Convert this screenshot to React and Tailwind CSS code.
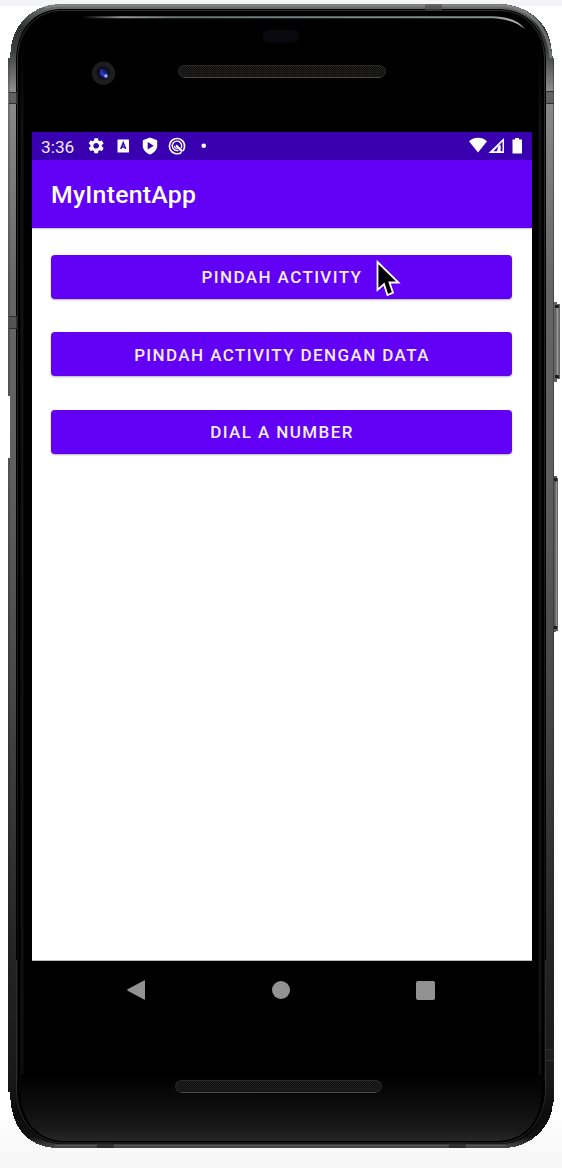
import React from "react";

function DeviceFrame() {
  return (
    <svg className="pointer-events-none absolute inset-0" width="562" height="1168" viewBox="0 0 562 1168" aria-hidden="true">
      <defs>
        <linearGradient id="rail" x1="0" y1="0" x2="0" y2="1">
          <stop offset="0" stopColor="#747575" />
          <stop offset="0.02" stopColor="#303131" />
          <stop offset="0.04" stopColor="#3c3d3d" />
          <stop offset="0.075" stopColor="#8b8b8b" />
          <stop offset="0.25" stopColor="#656565" />
          <stop offset="0.4" stopColor="#606060" />
          <stop offset="0.58" stopColor="#4a4a4a" />
          <stop offset="0.82" stopColor="#252525" />
          <stop offset="0.94" stopColor="#181818" />
          <stop offset="0.97" stopColor="#0c0c0c" />
          <stop offset="0.99" stopColor="#111" />
          <stop offset="1" stopColor="#4a4a4a" />
        </linearGradient>
        <linearGradient id="chin" x1="0" y1="1075" x2="0" y2="1142" gradientUnits="userSpaceOnUse">
          <stop offset="0" stopColor="#000" />
          <stop offset="0.4" stopColor="#0b0b0b" />
          <stop offset="0.8" stopColor="#191919" />
          <stop offset="1" stopColor="#272727" />
        </linearGradient>
        <linearGradient id="shine" x1="82" y1="0" x2="526" y2="0" gradientUnits="userSpaceOnUse">
          <stop offset="0" stopColor="#000" />
          <stop offset="0.09" stopColor="#979999" />
          <stop offset="0.22" stopColor="#697070" />
          <stop offset="0.5" stopColor="#778080" />
          <stop offset="0.92" stopColor="#879090" />
          <stop offset="1" stopColor="#b8c0c0" />
        </linearGradient>
        <linearGradient id="fade" x1="0" y1="0" x2="0" y2="1">
          <stop offset="0" stopColor="#777" />
          <stop offset="0.35" stopColor="#555" />
          <stop offset="0.8" stopColor="#292929" />
          <stop offset="1" stopColor="#222" />
        </linearGradient>
        <linearGradient id="stripe" x1="0" y1="40" x2="0" y2="1120" gradientUnits="userSpaceOnUse">
          <stop offset="0" stopColor="#000" />
          <stop offset="0.08" stopColor="#111" />
          <stop offset="0.9" stopColor="#101010" />
          <stop offset="1" stopColor="#0d0d0d" />
        </linearGradient>
        <radialGradient id="lens">
          <stop offset="0" stopColor="#2029a0" />
          <stop offset="0.6" stopColor="#101340" />
          <stop offset="1" stopColor="#080812" />
        </radialGradient>
        <pattern id="mesh" width="2" height="2" patternUnits="userSpaceOnUse">
          <rect width="2" height="2" fill="#0f0f0f" />
          <rect width="1" height="1" fill="#272523" />
          <rect x="1" y="1" width="1" height="1" fill="#1c1b1a" />
        </pattern>
      </defs>

      {/* volume and power keys */}
      <path d="M553 302h4v2h3v75h-3v3h-4z" fill="#646464" />
      <path d="M555 305h4v3h-4zM555 375h4v3h-4z" fill="#202020" />
      <path d="M557.500 308v67" stroke="#959595" strokeWidth="2" />
      <path d="M552 476h5v2h1v153h-2v1h-4z" fill="#5c5c5c" />
      <path d="M554 478h3v3h-3zM554 626h3v3h-3z" fill="#1c1c1c" />
      <path d="M556.500 482v144" stroke="#909090" strokeWidth="1.500" />

      {/* outer metal body */}
      <path
        shapeRendering="crispEdges"
        d="M58 4H502C532 6 552 26 552 55L554 59V1102H553C552 1128 530 1147 506 1148H54C28 1146 10 1128 10 1092H8V458H10V396H8V58H10C10 26 30 6 58 4Z"
        fill="url(#rail)"
      />
      <path d="M9 58V396M9 458V1092M553.500 60V1100" stroke="#222" strokeOpacity=".45" strokeWidth="1" />
      <path d="M45 7.500C50 6 55 5.500 60 5.500H500C507 5.500 513 7 518 9" fill="none" stroke="#858686" strokeWidth="2.500" strokeOpacity=".8" />
      <path d="M518 9C537 16 549 33 551 58" fill="none" stroke="#8a8a8a" strokeWidth="3" strokeOpacity=".65" />

      {/* glass */}
      <path d="M60 9H500C529 10 545 31 546 59V1090C545 1120 531 1143 500 1144H60C33 1143 17 1119 16 1090V59C17 29 34 10 60 9Z" fill="#000" />
      <path d="M17.500 1080V59C18 31 36 11 61 10.500H500C527 11 544 32 544.500 59V1080" fill="none" stroke="url(#fade)" strokeOpacity=".4" />
      <path d="M22 40V1090C22 1117 37 1136 62 1138H500C525 1136 540 1117 540 1090V40" fill="none" stroke="url(#stripe)" strokeWidth="3" />
      <path d="M21 1075H541V1092C541 1120 526 1139 500 1141H62C36 1139 21 1120 21 1092Z" fill="url(#chin)" />
      <path d="M16.500 960V1090C17 1119 34 1142 62 1143H500C528 1142 545 1119 545.500 1090V960" fill="none" stroke="#2c2c2c" strokeWidth="1" />
      <path d="M55 1145.500H506" stroke="#555" strokeWidth="1.500" />
      <path d="M82 16.300H492C508 16.500 519 21 525 29C516 22 506 19 492 18.300H82Z" fill="url(#shine)" />

      {/* antenna bands */}
      <g fill="#4c4c4c" fillOpacity=".65">
        <path d="M425 4.500h17v6h-17zM9 92h8v12H9zM546 91h8v12h-8zM9 316h8v12H9z" />
      </g>
      <g fill="#222" fillOpacity=".65">
        <path d="M97 1143h17v5H97zM449 1143h17v5h-17zM546 1049h8v12h-8z" />
      </g>
      <path d="M9 92.500h8M9 103.500h8M546 91.500h8M546 103.500h8M9 316.500h8M9 328.500h8" stroke="#303030" />
      <path d="M546 1049.500h8M546 1060.500h8" stroke="#333" />

      {/* sensor, camera and speaker grilles */}
      <rect x="263" y="30" width="36" height="12.500" rx="5" fill="#09080e" />
      <circle cx="103.500" cy="73.300" r="11.700" fill="#1d1d1e" />
      <circle cx="103.300" cy="73" r="6.500" fill="url(#lens)" />
      <path d="M101 69l2 1-1 2 3 2 2-1 1 3-3 2-3-2-2-3z" fill="#343fd0" fillOpacity=".8" />
      <circle cx="106" cy="76" r="1.700" fill="#93b0ff" />
      <rect x="178.500" y="65.500" width="207" height="12" rx="6" fill="url(#mesh)" stroke="#2a2a2a" />
      <path d="M184 77.500h196" stroke="#484848" />
      <rect x="175.500" y="1080.500" width="206" height="12" rx="6" fill="url(#mesh)" stroke="#2a2a2a" />
      <path d="M181 1092.500h195" stroke="#4a4a4a" />
    </svg>
  );
}

function NotificationIcons() {
  return (
    <svg className="ml-[13px]" width="120" height="20" viewBox="87 136 120 20" fill="#fff">
      <path
        transform="translate(86.700 136.300) scale(.79)"
        d="M19.140 12.940c.040-.3.060-.61.060-.94s-.020-.64-.070-.94l2.030-1.580a.49.49 0 0 0 .12-.61l-1.920-3.320a.49.49 0 0 0-.59-.22l-2.390.96a7 7 0 0 0-1.620-.94l-.36-2.540a.48.48 0 0 0-.48-.41h-3.840a.47.47 0 0 0-.47.41l-.36 2.540c-.59.240-1.130.570-1.620.94l-2.390-.96a.48.48 0 0 0-.59.220L2.740 8.870a.47.47 0 0 0 .12.610l2.030 1.580c-.050.3-.090.630-.090.940s.020.640.070.940l-2.030 1.580a.49.49 0 0 0-.12.610l1.920 3.320c.12.220.37.290.59.220l2.390-.96c.5.380 1.030.7 1.620.94l.36 2.540c.050.240.240.410.480.410h3.840c.240 0 .440-.170.470-.410l.36-2.540c.590-.240 1.130-.560 1.620-.940l2.390.960c.220.080.470 0 .590-.220l1.920-3.320a.47.47 0 0 0-.12-.610zM12 15.600A3.610 3.610 0 0 1 8.400 12c0-1.980 1.620-3.600 3.600-3.600s3.600 1.620 3.600 3.600-1.620 3.600-3.600 3.600z"
      />
      <rect x="117.500" y="139.500" width="11.500" height="13" rx=".5" />
      <path d="M120.700 149l2.500-6.300 2.500 6.300M121.700 147h3" fill="none" stroke="#3900af" strokeWidth="1.500" />
      <path fillRule="evenodd" d="M150 137.500l7.200 2.700v5.500c0 4-3 7.200-7.200 8.800-4.200-1.600-7.200-4.800-7.200-8.800v-5.500zM147.700 142v7.400l6-3.700z" />
      <g fill="none" stroke="#fff">
        <path d="M181.500 152.300A7.600 7.600 0 1 1 184.600 146c0 2-.6 3.700-1.700 5" strokeWidth="1.600" />
        <path d="M178.500 150.300A4.700 4.700 0 1 1 181.700 146c0 .8-.2 1.600-.5 2.200" strokeWidth="1.400" />
        <path d="M176 145.300l6.300 6.200" strokeWidth="2.200" />
        <path d="M174.200 146.200a2.300 2.300 0 0 0 3.600 1.500" strokeWidth="1.200" />
      </g>
      <circle cx="203.700" cy="145.700" r="2.300" />
    </svg>
  );
}

function SystemIcons() {
  return (
    <svg width="54" height="18" viewBox="469 137 54 18" fill="#fff">
      <path d="M469 141.200c5-4.500 13-4.500 18 0L478 152.500z" />
      <path fillRule="evenodd" d="M504 138v15h-15.500zM502.500 141.500l-9 9.800h3.500l1-4.500 2.500-1.500v6h2z" />
      <path d="M498.300 146.300l2-1.800v7h-2z" />
      <path d="M515 138h4v1.500h3v14h-9.500v-14h2.500z" />
    </svg>
  );
}

function ActionButton({ children }) {
  return (
    <button className="h-11 w-full rounded bg-[#6200f5] pb-px pl-px text-center text-[17px] leading-5 font-medium tracking-[1.400px] text-[#f5edff] uppercase shadow-[0_1px_2px_rgba(0,0,0,0.3)]">
      <span className="relative top-px">{children}</span>
    </button>
  );
}

export default function App() {
  return (
    <div className="relative h-[1168px] w-[562px] overflow-hidden bg-white font-[Roboto,sans-serif]">
      <div className="absolute inset-x-0 top-0 h-1.5 bg-[#f5f5f7]" />
      <div className="absolute inset-x-0 bottom-0 h-12 bg-linear-to-b from-[#fcfcfc] to-[#f6f6f6]" />
      <DeviceFrame />
      <div className="relative flex h-full flex-col pt-[132px] pr-[30px] pl-8">
        <main className="h-[829px] border-b border-[#bbb] bg-white">
          <div className="flex h-7 items-center bg-[#3900af] pr-[9px] pl-[9px]">
            <span className="w-[33px] pt-px text-[17.300px] leading-5 text-[#f2e9ff]">3:36</span>
            <NotificationIcons />
            <div className="ml-auto">
              <SystemIcons />
            </div>
          </div>
          <header className="flex h-[68px] items-center bg-[#6200f5] pt-px pl-[19px] shadow-[0_1px_1px_rgba(0,0,0,0.2)]">
            <h1 className="text-[24.800px] leading-8 font-medium tracking-[0.250px] text-white">MyIntentApp</h1>
          </header>
          <div className="flex flex-col gap-[33.700px] px-5 pt-[26.500px] pl-[19px]">
            <ActionButton>Pindah Activity</ActionButton>
            <ActionButton>Pindah Activity Dengan Data</ActionButton>
            <ActionButton>Dial a Number</ActionButton>
          </div>
        </main>
        <nav className="flex h-[58px] items-center justify-between pr-[97px] pl-[95px]">
          <svg width="18" height="20" viewBox="0 0 18 20" fill="#929292">
            <path d="M17 0.500Q18 0 18 1V19Q18 20 17 19.500L0.600 10.700Q-0.200 10 0.600 9.300Z" />
          </svg>
          <div className="ml-px size-[18px] rounded-full bg-[#929292]" />
          <div className="size-[19px] rounded-[2px] bg-[#929292]" />
        </nav>
      </div>
      <svg className="absolute top-[259px] left-[375px]" width="26" height="40" viewBox="0 0 26 40">
        <path d="M2.500 3V31L9 25.200L12.500 36L18 33.700L14.500 23.500H23.500Z" fill="#000" stroke="#fff" strokeWidth="1.800" />
      </svg>
    </div>
  );
}
